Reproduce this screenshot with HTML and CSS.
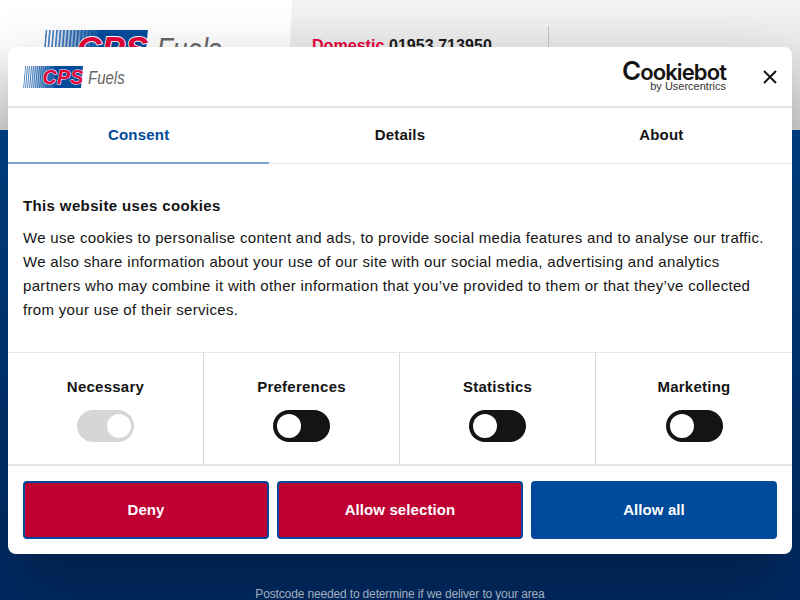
FILE: index.html
```html
<!DOCTYPE html>
<html lang="en">
<head>
    <meta charset="UTF-8">
    <meta name="viewport" content="width=device-width, initial-scale=1.0">
    <title>CPS Fuels</title>
    <link rel="stylesheet" href="styles.css">
</head>
<body>
    <header class="site-header">
        <div class="site-logo">
            <svg width="180" height="39" viewBox="0 0 102 22">
                <use href="#cps-logo"></use>
            </svg>
        </div>
        <div class="site-phone">
            <p><span class="phone-label">Domestic</span> 01953 713950</p>
        </div>
    </header>

    <main class="hero">
        <div class="hero-bar"></div>
        <p class="hero-note">Postcode needed to determine if we deliver to your area</p>
    </main>

    <svg class="svg-defs" width="0" height="0">
        <defs>
            <linearGradient id="stripe-fade" x1="0" x2="1" y1="0" y2="0">
                <stop offset="0" stop-color="#004a9c" stop-opacity="0"></stop>
                <stop offset="0.5" stop-color="#004a9c"></stop>
                <stop offset="1" stop-color="#004a9c"></stop>
            </linearGradient>
            <pattern id="stripes" width="2" height="22" patternUnits="userSpaceOnUse" patternTransform="skewX(-5)">
                <rect width="1" height="22" fill="#4f82bd"></rect>
            </pattern>
            <g id="cps-logo">
                <polygon points="2,0 30,0 28,22 0,22" fill="url(#stripes)"></polygon>
                <polygon points="8,0 60,0 58,22 6,22" fill="url(#stripe-fade)"></polygon>
                <text x="19.5" y="17.5" class="logo-cps">CPS</text>
                <text transform="translate(65 17.5) scale(1 1.25)" class="logo-fuels">Fuels</text>
            </g>
        </defs>
    </svg>

    <section class="cookie-dialog">
        <div class="dialog-top">
            <svg class="dialog-logo" width="102" height="22" viewBox="0 0 102 22">
                <use href="#cps-logo"></use>
            </svg>
            <div class="cookiebot">
                <div class="cookiebot-name"><span class="cookiebot-c">C</span>ookiebot</div>
                <div class="cookiebot-by">by Usercentrics</div>
            </div>
            <svg class="dialog-close" width="14" height="14" viewBox="0 0 14 14">
                <path d="M1 1 L13 13 M13 1 L1 13" stroke="#141414" stroke-width="2" fill="none"></path>
            </svg>
        </div>

        <nav class="dialog-tabs">
            <a class="tab tab-active">Consent</a>
            <a class="tab">Details</a>
            <a class="tab">About</a>
        </nav>

        <div class="dialog-body">
            <h4>This website uses cookies</h4>
            <p>We use cookies to personalise content and ads, to provide social media features and to analyse our traffic. We also share information about your use of our site with our social media, advertising and analytics partners who may combine it with other information that you’ve provided to them or that they’ve collected from your use of their services.</p>
        </div>

        <div class="consent-row">
            <div class="consent-item">
                <span class="consent-name">Necessary</span>
                <span class="toggle toggle-locked"></span>
            </div>
            <div class="consent-item">
                <span class="consent-name">Preferences</span>
                <span class="toggle"></span>
            </div>
            <div class="consent-item">
                <span class="consent-name">Statistics</span>
                <span class="toggle"></span>
            </div>
            <div class="consent-item">
                <span class="consent-name">Marketing</span>
                <span class="toggle"></span>
            </div>
        </div>

        <div class="dialog-buttons">
            <button class="btn btn-red">Deny</button>
            <button class="btn btn-red">Allow selection</button>
            <button class="btn btn-blue">Allow all</button>
        </div>
    </section>
</body>
</html>
```

FILE: styles.css
```css
* {
    box-sizing: border-box;
}

body {
    margin: 0;
    width: 800px;
    height: 600px;
    overflow: hidden;
    position: relative;
    font-family: "Liberation Sans", Arial, sans-serif;
    color: #141414;
}

.svg-defs {
    position: absolute;
}

.logo-cps {
    font-family: "Liberation Sans", Arial, sans-serif;
    font-size: 19.5px;
    font-weight: bold;
    font-style: italic;
    fill: #e4003a;
    stroke: #fff;
    stroke-width: 1px;
    paint-order: stroke;
    letter-spacing: 0.3px;
}

.logo-fuels {
    font-family: "Liberation Sans", Arial, sans-serif;
    font-size: 15px;
    font-style: italic;
    fill: #666;
}

/* page behind the dialog */
.site-header {
    height: 130px;
    display: flex;
    padding: 30px 0 0 42px;
    background: linear-gradient(#fff, #fdfdfd 35%, #dedede);
    position: relative;
}

.site-header::before {
    content: "";
    position: absolute;
    top: 0;
    right: 0;
    bottom: 0;
    width: 514px;
    background: linear-gradient(#f3f3f3, #e6e6e6 50%, #dadada);
    clip-path: polygon(6px 0, 100% 0, 100% 100%, 0 100%);
}

.site-logo {
    position: relative;
    width: 226px;
}

.site-phone {
    position: relative;
    margin-left: 44px;
    margin-top: -4px;
    width: 237px;
    height: 100px;
    border-right: 1px solid #c4c4c4;
}

.site-phone p {
    margin: 11px 0 0;
    font-size: 16px;
    font-weight: bold;
    letter-spacing: 0.05px;
    color: #1a1a1a;
}

.phone-label {
    color: #e4003a;
}

.hero {
    height: 470px;
    display: flex;
    flex-direction: column;
    align-items: center;
    background: linear-gradient(#00458f, #002a63);
}

.hero-bar {
    width: 436px;
    height: 3px;
    margin-top: 424px;
    background: #be0032;
}

.hero-note {
    margin: 33px 0 0;
    font-size: 12px;
    letter-spacing: -0.15px;
    color: #b9c4d8;
}

/* cookie dialog */
.cookie-dialog {
    position: absolute;
    top: 47px;
    left: 8px;
    width: 784px;
    height: 507px;
    background: #fff;
    border-radius: 8px;
    box-shadow: 0 32px 68px rgba(0, 0, 0, 0.3);
    display: flex;
    flex-direction: column;
}

.dialog-top {
    height: 61px;
    flex: none;
    display: flex;
    align-items: center;
    padding: 0 15px;
    border-bottom: 2px solid #e6e6e6;
}

.cookiebot {
    margin-left: auto;
    margin-right: 37px;
    margin-top: -1px;
    text-align: right;
}

.cookiebot-name {
    font-family: Inter, sans-serif;
    font-weight: 600;
    font-size: 22px;
    line-height: 22px;
    letter-spacing: -0.9px;
    margin-bottom: -2px;
    color: #141414;
}

.cookiebot-c {
    font-size: 26px;
    line-height: 20px;
}

.cookiebot-by {
    font-family: "Liberation Sans", Arial, sans-serif;
    font-size: 11px;
    line-height: 10px;
    color: #333;
}

.dialog-close {
    flex: none;
}

.dialog-tabs {
    height: 56px;
    flex: none;
    display: flex;
    border-bottom: 1px solid #e6e6e6;
}

.tab {
    flex: 1;
    display: flex;
    align-items: center;
    justify-content: center;
    padding-bottom: 2px;
    font-size: 15px;
    font-weight: bold;
    letter-spacing: 0.2px;
    color: #141414;
}

.tab-active {
    color: #004a9c;
    border-bottom: 2px solid #7fa4cd;
    margin-bottom: -1px;
}

.dialog-body {
    flex: 1;
    padding: 32px 15px 0;
}

.dialog-body h4 {
    margin: 0 0 10px;
    font-size: 15px;
    line-height: 20px;
    font-weight: bold;
    letter-spacing: 0.37px;
}

.dialog-body p {
    margin: 0;
    font-size: 15px;
    line-height: 24px;
    letter-spacing: 0.32px;
}

.consent-row {
    height: 114px;
    flex: none;
    display: flex;
    border-top: 1px solid #e6e6e6;
    border-bottom: 2px solid #e6e6e6;
}

.consent-item {
    flex: 0 0 25%;
    display: flex;
    flex-direction: column;
    align-items: center;
    padding-top: 25px;
    gap: 14px;
    border-right: 1px solid #d8d8d8;
}

.consent-item:last-child {
    border-right: none;
}

.consent-name {
    font-size: 15px;
    line-height: 18px;
    font-weight: bold;
    letter-spacing: 0.25px;
}

.toggle {
    width: 57px;
    height: 32px;
    border-radius: 16px;
    background: #141414;
    padding: 4px;
    display: flex;
}

.toggle::after {
    content: "";
    width: 24px;
    height: 24px;
    border-radius: 50%;
    background: #fff;
}

.toggle-locked {
    background: #d6d6d6;
    justify-content: flex-end;
    padding-right: 3px;
}

.dialog-buttons {
    height: 88px;
    flex: none;
    display: flex;
    gap: 8px;
    padding: 15px 15px 0;
}

.btn {
    flex: 1;
    height: 58px;
    padding: 0 0 2px;
    font-family: inherit;
    font-size: 15px;
    font-weight: bold;
    color: #fff;
    border: 2px solid #004a9c;
    border-radius: 4px;
    letter-spacing: 0.1px;
}

.btn-red {
    background: #be0032;
}

.btn-blue {
    background: #004a9c;
}
```
